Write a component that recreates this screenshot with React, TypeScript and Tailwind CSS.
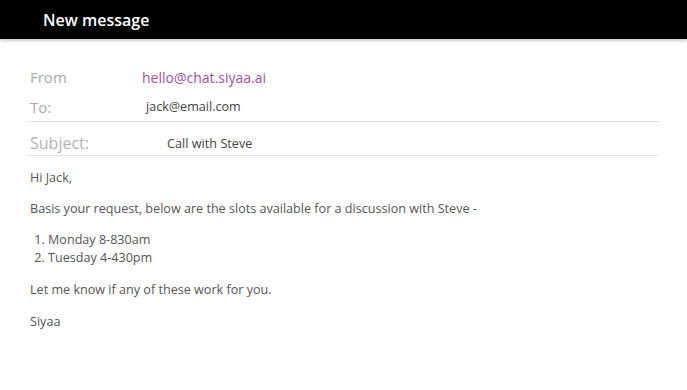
export default function App() {
  return (
    <div className="min-h-screen bg-white font-['Open_Sans',sans-serif]">
      <div className="h-[39px] bg-black flex items-center pl-[43px] shadow-[0_2px_3px_rgba(0,0,0,0.2)]">
        <h1 className="text-white text-[16px] font-semibold leading-none">New message</h1>
      </div>

      <div className="pl-[27px] pr-[28px] pt-[27px]">
        <div className="flex items-center h-[22px] pl-[3px]">
          <span className="w-[112px] text-[15px] text-[#a9a9a9]">From</span>
          <span className="text-[14px] text-[#a0509b]">hello@chat.siyaa.ai</span>
        </div>
        <div className="flex items-center h-[22px] pl-[3px] mt-[8px] mb-[3px]">
          <span className="w-[116px] text-[15px] text-[#a9a9a9]">To:</span>
          <span className="text-[12.6px] text-[#444]">jack@email.com</span>
        </div>
        <div className="flex items-end h-[35px] pl-[3px] border-y border-[#e2e2e2]">
          <span className="w-[137px] text-[16px] text-[#b3b3b3] leading-[24px]">Subject:</span>
          <span className="text-[12.7px] text-[#444] leading-[24px]">Call with Steve</span>
        </div>
      </div>

      <div className="pl-[30px] pt-[13px] text-[12.6px] text-[#555] leading-[18px]">
        <p>Hi Jack,</p>
        <p className="mt-[13px]">Basis your request, below are the slots available for a discussion with Steve -</p>
        <ol className="mt-[13px] list-decimal pl-[18px]">
          <li>Monday 8-830am</li>
          <li>Tuesday 4-430pm</li>
        </ol>
        <p className="mt-[14px]">Let me know if any of these work for you.</p>
        <p className="mt-[14px]">Siyaa</p>
      </div>
    </div>
  );
}
